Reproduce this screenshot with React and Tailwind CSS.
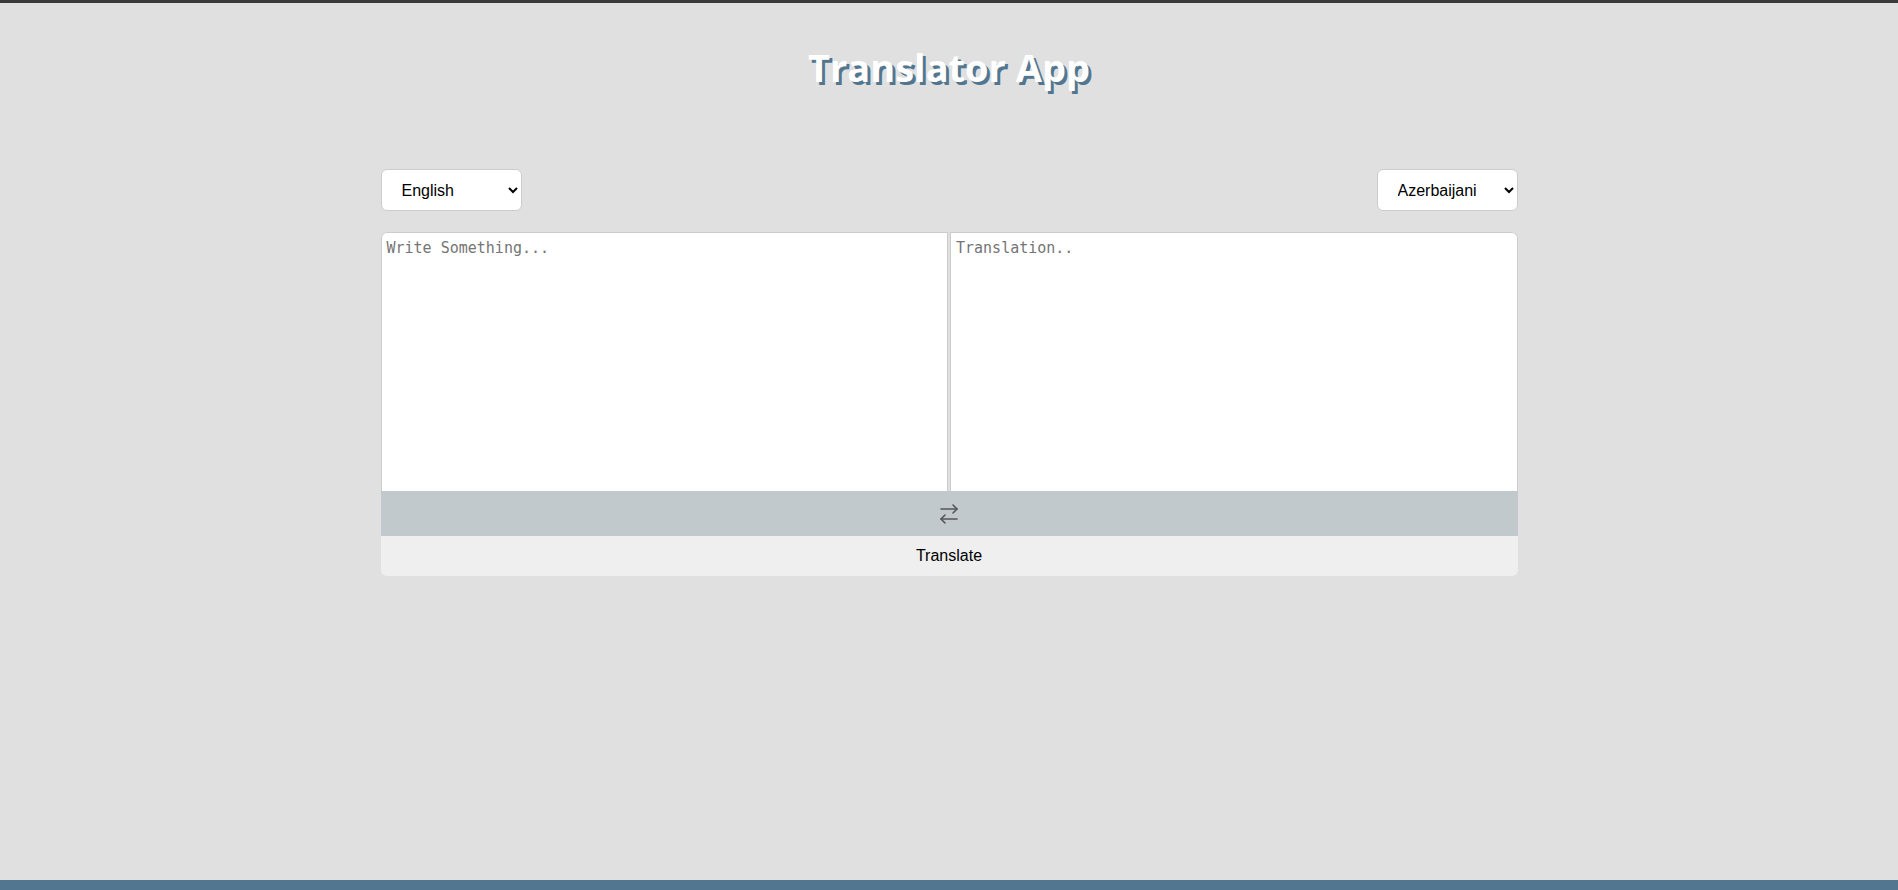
import React from "react";

function SwapIcon() {
  return (
    <svg width="24" height="24" viewBox="0 0 24 24" fill="none" stroke="#555" strokeWidth="1.6" strokeLinecap="round" strokeLinejoin="round">
      <path d="m16 3 4 4-4 4" />
      <path d="M20 7H4" />
      <path d="m8 21-4-4 4-4" />
      <path d="M4 17h16" />
    </svg>
  );
}

export default function App() {
  return (
    <div className="min-h-[890px] h-[890px] flex flex-col bg-[#e0e0e0] border-t-[3px] border-[#3a3a3a]" style={{ fontFamily: '"Liberation Sans", Arial, sans-serif' }}>
      <div className="flex-1">
        <h1 className="text-center pt-[39px] text-[38px] leading-[50px] font-bold text-white [text-shadow:3px_3px_0_#527690]" style={{ fontFamily: '"Open Sans", sans-serif' }}>
          Translator App
        </h1>
        <div className="w-[1137px] mx-auto mt-[77px]">
          <div className="flex justify-between">
            <select defaultValue="en" className="w-[141px] h-[42px] rounded-[6px] border border-[#ccc] bg-white pl-4 pr-2 text-[16px] text-black outline-none">
              <option value="en">English</option>
            </select>
            <select defaultValue="az" className="w-[141px] h-[42px] rounded-[6px] border border-[#ccc] bg-white pl-4 pr-2 text-[16px] text-black outline-none">
              <option value="az">Azerbaijani</option>
            </select>
          </div>
          <div className="mt-[21px] rounded-[6px] overflow-hidden">
            <div className="flex gap-[2px] h-[259px]">
              <textarea
                placeholder="Write Something..."
                className="flex-1 resize-none bg-white border border-[#ccc] border-b-0 rounded-tl-[6px] px-[5px] py-[5px] text-[15px] leading-[20px] placeholder-[#757575] outline-none"
                style={{ fontFamily: '"DejaVu Sans Mono", monospace' }}
              />
              <textarea
                placeholder="Translation.."
                className="flex-1 resize-none bg-white border border-[#ccc] border-b-0 rounded-tr-[6px] px-[5px] py-[5px] text-[15px] leading-[20px] placeholder-[#757575] outline-none"
                style={{ fontFamily: '"DejaVu Sans Mono", monospace' }}
                readOnly
              />
            </div>
            <div className="h-[45px] bg-[#c1c9cc] flex items-center justify-center">
              <SwapIcon />
            </div>
            <button className="w-full h-[40px] bg-[#efefef] text-[16px] text-black flex items-center justify-center">
              Translate
            </button>
          </div>
        </div>
      </div>
      <div className="h-[10px] bg-[#527690]" />
    </div>
  );
}
